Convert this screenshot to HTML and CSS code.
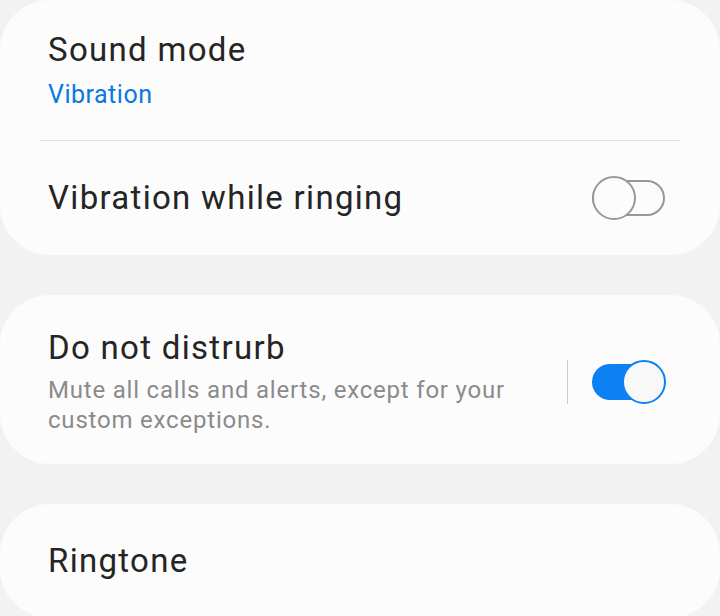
FILE: index.html
```html
<!DOCTYPE html>
<html>
<head>
<meta charset="utf-8">
<link rel="stylesheet" href="styles.css">
</head>
<body>
<div class="list">
  <section class="card">
    <div class="row row-stack">
      <div class="title">Sound mode</div>
      <div class="value">Vibration</div>
    </div>
    <div class="divider"></div>
    <div class="row row-single">
      <div class="title">Vibration while ringing</div>
      <div class="toggle off"><span class="track"></span><span class="thumb"></span></div>
    </div>
  </section>
  <section class="card">
    <div class="row row-dnd">
      <div class="text">
        <div class="title">Do not distrurb</div>
        <div class="sub">Mute all calls and alerts, except for your custom exceptions.</div>
      </div>
      <div class="vsep"></div>
      <div class="toggle on"><span class="track"></span><span class="thumb"></span></div>
    </div>
  </section>
  <section class="card">
    <div class="row row-single">
      <div class="title">Ringtone</div>
    </div>
  </section>
</div>
</body>
</html>
```
FILE: styles.css
```css
html, body {
  margin: 0;
  padding: 0;
  background: #f2f2f2;
  font-family: Roboto, "Noto Sans", sans-serif;
}
.list {
  display: flex;
  flex-direction: column;
  gap: 40px;
}
.card {
  background: #fcfcfc;
  border-radius: 50px;
}
.row {
  display: flex;
  align-items: center;
  padding: 0 54px 0 48px;
}
.row-stack {
  flex-direction: column;
  align-items: flex-start;
  padding-top: 30px;
  padding-bottom: 30px;
}
.row-single {
  height: 114px;
  box-sizing: border-box;
  justify-content: space-between;
}
.title {
  font-size: 33px;
  line-height: 40px;
  letter-spacing: 1.3px;
  color: #252525;
}
.value {
  margin-top: 10px;
  font-size: 25px;
  line-height: 30px;
  letter-spacing: 0.5px;
  color: #0b77e2;
}
.sub {
  margin-top: 7px;
  font-size: 24px;
  line-height: 30px;
  letter-spacing: 0.8px;
  color: #8b8b8b;
}
.divider {
  height: 1px;
  background: #e0e0e0;
  margin: 0 40px;
}
.row-dnd {
  padding-top: 33px;
  padding-bottom: 29px;
}
.text {
  flex: 1;
}
.vsep {
  width: 1px;
  height: 44px;
  background: #cccccc;
  margin: 0 24px 0 4px;
}
.toggle {
  position: relative;
  width: 74px;
  height: 44px;
  flex: none;
}
.toggle .track {
  position: absolute;
  left: 0;
  top: 4px;
  width: 73px;
  height: 36px;
  box-sizing: border-box;
  border-radius: 18px;
}
.toggle .thumb {
  position: absolute;
  top: 0;
  width: 44px;
  height: 44px;
  box-sizing: border-box;
  border-radius: 50%;
}
.toggle.off .track {
  border: 2px solid #989898;
}
.toggle.off .thumb {
  left: 0;
  background: #fcfcfc;
  border: 2px solid #989898;
}
.toggle.on .track {
  background: #0c81f4;
}
.toggle.on .thumb {
  right: 0;
  background: #f8f8f8;
  border: 2px solid #0c81f4;
}
```
